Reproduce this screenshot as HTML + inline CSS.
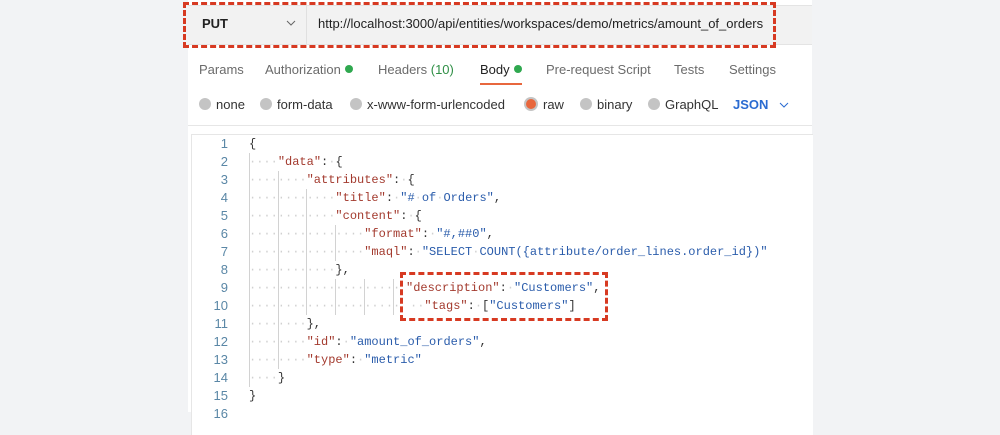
<!DOCTYPE html><html><head><meta charset="utf-8"><style>
body{margin:0;width:1000px;height:412px;background:#f2f3f5;position:relative;overflow:hidden;font-family:"Liberation Sans",sans-serif}
.panel{position:absolute;left:188px;top:0;width:624px;height:412px;background:#fff}
.url{position:absolute;left:188px;top:5px;width:624px;height:38px;background:#f2f2f2;border-top:1px solid #e4e4e4;border-bottom:1px solid #e4e4e4}
.sep{position:absolute;left:306px;top:5px;width:1px;height:39px;background:#e0e0e0}
.t{position:absolute;font-size:13px;color:#6b6b6b;white-space:nowrap}
.dot{display:inline-block;width:8px;height:8px;border-radius:50%;background:#2fa84f;margin-left:4px;vertical-align:1px}
.rad{position:absolute;width:12px;height:12px;border-radius:50%;background:#c4c4c4;top:98px}
.ed{position:absolute;left:191px;top:134px;width:621px;height:300px;border-left:1px solid #e6e6e6;border-top:1px solid #e6e6e6;background:#fff}
.code{position:absolute;font-family:"Liberation Mono",monospace;font-size:12px;white-space:pre;line-height:18px}
.ln{position:absolute;left:188px;width:40px;text-align:right;color:#5a87a6;font-family:"Liberation Sans",sans-serif;font-size:13px;line-height:18px}
.k{color:#a33a2e}.s{color:#2a5cab}.p{color:#333}.d{color:#d0d0d0}
.g{position:absolute;width:1px;background:#d2d2d2}
.box{position:absolute;border:3px dashed #d73a22}
</style></head><body>
<div class="panel"></div>
<div style="position:absolute;left:188px;top:125px;width:624px;height:1px;background:#e6e6e6"></div>
<div class="url"></div><div class="sep"></div>
<div class="t" style="left:202px;top:16px;color:#222;font-weight:bold">PUT</div>
<svg style="position:absolute;left:286px;top:20px" width="10" height="6"><path d="M1 1l4 4 4-4" stroke="#666" fill="none"/></svg>
<div class="t" style="left:318px;top:16px;color:#222">http://localhost:3000/api/entities/workspaces/demo/metrics/amount_of_orders</div>
<div class="box" style="left:183px;top:2px;width:587px;height:40px"></div>
<div class="t" style="left:199px;top:62px">Params</div>
<div class="t" style="left:265px;top:62px">Authorization<span class="dot"></span></div>
<div class="t" style="left:378px;top:62px">Headers <span style="color:#2f8f46">(10)</span></div>
<div class="t" style="left:480px;top:62px;color:#222">Body<span class="dot"></span></div>
<div style="position:absolute;left:480px;top:83px;width:42px;height:2px;background:#e8673d"></div>
<div class="t" style="left:546px;top:62px">Pre-request Script</div>
<div class="t" style="left:674px;top:62px">Tests</div>
<div class="t" style="left:729px;top:62px">Settings</div>
<div class="rad" style="left:199px"></div><div class="t" style="left:216px;top:97px;color:#333">none</div>
<div class="rad" style="left:260px"></div><div class="t" style="left:277px;top:97px;color:#333">form-data</div>
<div class="rad" style="left:350px"></div><div class="t" style="left:367px;top:97px;color:#333">x-www-form-urlencoded</div>
<div class="rad" style="background:#e8673d;box-shadow:0 0 0 2px #c4c4c4;width:10px;height:10px;top:99px;left:526px"></div><div class="t" style="left:543px;top:97px;color:#333">raw</div>
<div class="rad" style="left:580px"></div><div class="t" style="left:597px;top:97px;color:#333">binary</div>
<div class="rad" style="left:648px"></div><div class="t" style="left:665px;top:97px;color:#333">GraphQL</div>
<div class="t" style="left:733px;top:97px;color:#2a6bd1;font-weight:bold">JSON</div>
<svg style="position:absolute;left:779px;top:102px" width="10" height="6"><path d="M1 1l4 4 4-4" stroke="#2a6bd1" fill="none"/></svg>
<div class="ed"></div>
<div class="ln" style="top:135px">1<br>2<br>3<br>4<br>5<br>6<br>7<br>8<br>9<br>10<br>11<br>12<br>13<br>14<br>15<br>16</div>
<div class="g" style="left:249px;top:153px;height:234px"></div>
<div class="g" style="left:278px;top:171px;height:198px"></div>
<div class="g" style="left:306px;top:189px;height:126px"></div>
<div class="g" style="left:335px;top:225px;height:36px"></div>
<div class="g" style="left:335px;top:279px;height:36px"></div>
<div class="g" style="left:364px;top:279px;height:36px"></div>
<div class="g" style="left:393px;top:279px;height:36px"></div>
<div class="code" style="left:249px;top:135px"><span class="p">{</span>
<span class="d">····</span><span class="k">"data"</span><span class="p">:</span><span class="d">·</span><span class="p">{</span>
<span class="d">········</span><span class="k">"attributes"</span><span class="p">:</span><span class="d">·</span><span class="p">{</span>
<span class="d">············</span><span class="k">"title"</span><span class="p">:</span><span class="d">·</span><span class="s">"#<span class="d">·</span>of<span class="d">·</span>Orders"</span><span class="p">,</span>
<span class="d">············</span><span class="k">"content"</span><span class="p">:</span><span class="d">·</span><span class="p">{</span>
<span class="d">················</span><span class="k">"format"</span><span class="p">:</span><span class="d">·</span><span class="s">"#,##0"</span><span class="p">,</span>
<span class="d">················</span><span class="k">"maql"</span><span class="p">:</span><span class="d">·</span><span class="s">"SELECT<span class="d">·</span>COUNT({attribute/order_lines.order_id})"</span>
<span class="d">············</span><span class="p">},</span>
<span class="d">·····················</span>
<span class="d">·····················</span>
<span class="d">········</span><span class="p">},</span>
<span class="d">········</span><span class="k">"id"</span><span class="p">:</span><span class="d">·</span><span class="s">"amount_of_orders"</span><span class="p">,</span>
<span class="d">········</span><span class="k">"type"</span><span class="p">:</span><span class="d">·</span><span class="s">"metric"</span>
<span class="d">····</span><span class="p">}</span>
<span class="p">}</span></div>
<div class="code" style="left:406px;top:279px"><span class="k">"description"</span><span class="p">:</span><span class="d">·</span><span class="s">"Customers"</span><span class="p">,</span></div>
<div class="code" style="left:410px;top:297px"><span class="d">··</span><span class="k">"tags"</span><span class="p">:</span><span class="d">·</span><span class="p">[</span><span class="s">"Customers"</span><span class="p">]</span></div>
<div class="box" style="left:400px;top:272px;width:202px;height:43px"></div>
</body></html>
